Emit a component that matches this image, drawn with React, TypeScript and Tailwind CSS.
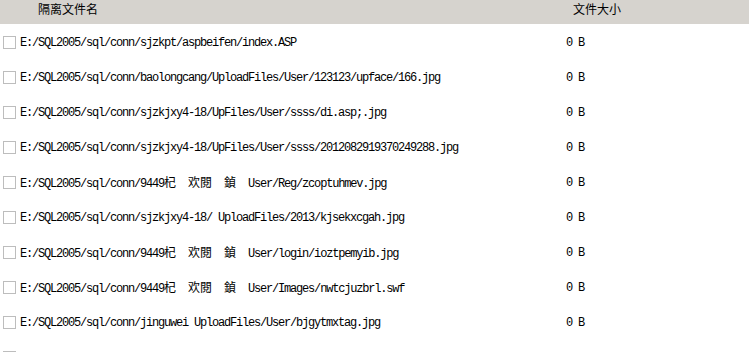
import React from 'react';

type Part = { t: string; cjk?: boolean };

const rows: Part[][] = [
  [{ t: 'E:/SQL2005/sql/conn/sjzkpt/aspbeifen/index.ASP' }],
  [{ t: 'E:/SQL2005/sql/conn/baolongcang/UploadFiles/User/123123/upface/166.jpg' }],
  [{ t: 'E:/SQL2005/sql/conn/sjzkjxy4-18/UpFiles/User/ssss/di.asp;.jpg' }],
  [{ t: 'E:/SQL2005/sql/conn/sjzkjxy4-18/UpFiles/User/ssss/2012082919370249288.jpg' }],
  [
    { t: 'E:/SQL2005/sql/conn/9449' },
    { t: '杞', cjk: true },
    { t: '  ' },
    { t: '欢閱', cjk: true },
    { t: '  ' },
    { t: '鍞', cjk: true },
    { t: '  User/Reg/zcoptuhmev.jpg' },
  ],
  [{ t: 'E:/SQL2005/sql/conn/sjzkjxy4-18/ UploadFiles/2013/kjsekxcgah.jpg' }],
  [
    { t: 'E:/SQL2005/sql/conn/9449' },
    { t: '杞', cjk: true },
    { t: '  ' },
    { t: '欢閱', cjk: true },
    { t: '  ' },
    { t: '鍞', cjk: true },
    { t: '  User/login/ioztpemyib.jpg' },
  ],
  [
    { t: 'E:/SQL2005/sql/conn/9449' },
    { t: '杞', cjk: true },
    { t: '  ' },
    { t: '欢閱', cjk: true },
    { t: '  ' },
    { t: '鍞', cjk: true },
    { t: '  User/Images/nwtcjuzbrl.swf' },
  ],
  [{ t: 'E:/SQL2005/sql/conn/jinguwei UploadFiles/User/bjgytmxtag.jpg' }],
  [{ t: '' }],
];

const mono = "font-['Liberation_Mono','Noto_Sans_CJK_SC',monospace] text-[12px] tracking-[-1.2px] whitespace-pre";
const cjk = "font-['Noto_Sans_CJK_SC',sans-serif] text-[12px] tracking-normal";

export default function App() {
  return (
    <div className="w-[749px] h-[352px] overflow-hidden bg-white text-black">
      <div className={`h-[24px] bg-[#d6d3ce] flex items-start pt-[1px] ${cjk}`}>
        <div className="w-[560px] pl-[38px] leading-[16px]">隔离文件名</div>
        <div className="pl-[13px] leading-[16px]">文件大小</div>
      </div>
      <div className="mt-[1px]">
        {rows.map((parts, i) => (
          <div key={i} className="h-[35px] flex items-center">
            <div className="w-[20px] pl-[3px] flex items-center">
              <span className="block w-[13px] h-[13px] border border-[#bdbdbd] bg-white" />
            </div>
            <div className={`w-[546px] leading-[14px] ${mono}`}>
              {parts.map((p, j) =>
                p.cjk ? (
                  <span key={j} className={cjk}>{p.t}</span>
                ) : (
                  <span key={j}>{p.t}</span>
                )
              )}
            </div>
            {parts[0].t && <div className={mono}>0 B</div>}
          </div>
        ))}
      </div>
    </div>
  );
}
